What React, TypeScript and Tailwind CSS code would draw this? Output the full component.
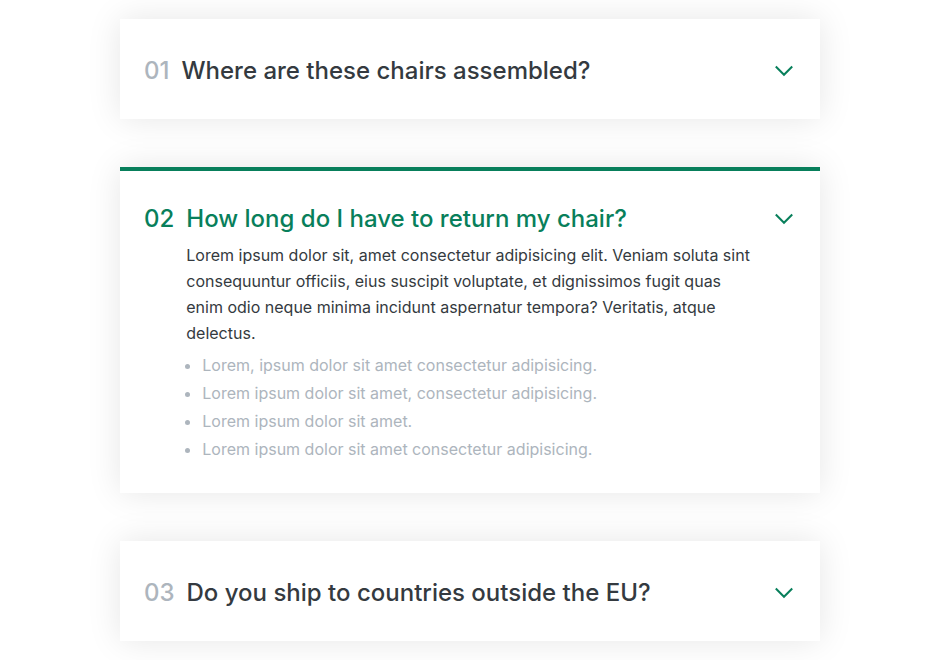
const items = [
  {
    num: "01",
    title: "Where are these chairs assembled?",
  },
  {
    num: "02",
    title: "How long do I have to return my chair?",
    open: true,
  },
  {
    num: "03",
    title: "Do you ship to countries outside the EU?",
  },
];

function Chevron() {
  return (
    <svg
      viewBox="0 0 24 24"
      fill="none"
      stroke="#087f5b"
      strokeWidth={2}
      className="h-6 w-6"
    >
      <path d="M19.5 8.25l-7.5 7.5-7.5-7.5" strokeLinecap="square" />
    </svg>
  );
}

export default function App() {
  return (
    <div
      className="min-h-screen bg-white pt-[19px] pb-8"
      style={{ fontFamily: "Inter, 'Noto Sans', sans-serif" }}
    >
      <div className="ml-[120px] flex w-[700px] flex-col gap-12">
        {items.map((item) => (
          <div
            key={item.num}
            className={`grid grid-cols-[auto_1fr_auto] items-center gap-x-3 border-t-4 bg-white px-6 pt-8 shadow-[0_0_32px_rgba(0,0,0,0.1)] ${
              item.open ? "border-[#087f5b] pb-[30px]" : "border-white pb-8"
            }`}
          >
            <span
              className={`text-2xl leading-8 font-medium ${
                item.open ? "text-[#087f5b]" : "text-[#adb5bd]"
              }`}
            >
              {item.num}
            </span>
            <h3
              className={`text-2xl leading-8 font-medium ${
                item.open ? "text-[#087f5b]" : "text-[#343a40]"
              }`}
            >
              {item.title}
            </h3>
            <Chevron />
            {item.open && (
              <div className="col-start-2 mt-[7px]">
                <p className="text-base leading-[26px] text-[#343a40]">
                  Lorem ipsum dolor sit, amet consectetur adipisicing elit. Veniam soluta sint
                  consequuntur officiis, eius suscipit voluptate, et dignissimos fugit quas enim
                  odio neque minima incidunt aspernatur tempora? Veritatis, atque delectus.
                </p>
                <ul className="mt-[5px] list-disc pl-4 text-base leading-7 text-[#adb5bd]">
                  <li>Lorem, ipsum dolor sit amet consectetur adipisicing.</li>
                  <li>Lorem ipsum dolor sit amet, consectetur adipisicing.</li>
                  <li>Lorem ipsum dolor sit amet.</li>
                  <li>Lorem ipsum dolor sit amet consectetur adipisicing.</li>
                </ul>
              </div>
            )}
          </div>
        ))}
      </div>
    </div>
  );
}
